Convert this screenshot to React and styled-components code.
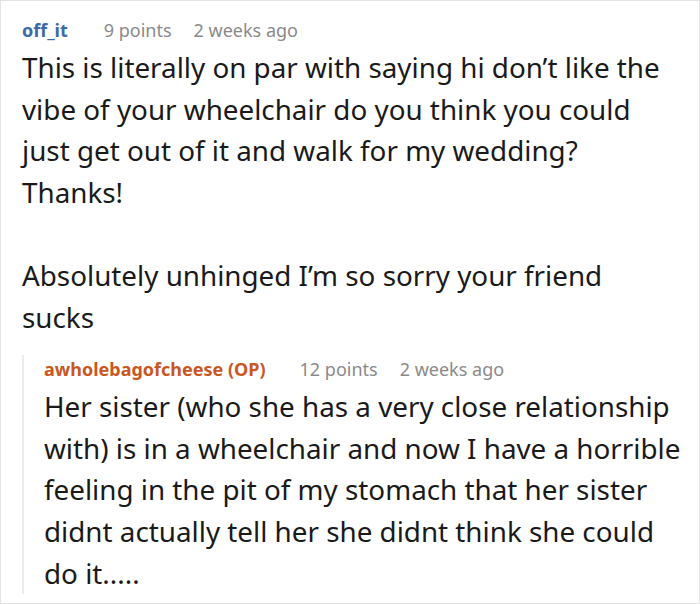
import React from 'react'
import styled, { createGlobalStyle } from 'styled-components'

const Global = createGlobalStyle`
  html, body { margin: 0; padding: 0; background: #fff; }
  body { font-family: "Noto Sans", sans-serif; }
`

const Frame = styled.div`
  width: 700px;
  height: 604px;
  box-sizing: border-box;
  border: 1px solid #e3e3e3;
  padding: 15px 0 0 21px;
  overflow: hidden;
`

const Comment = styled.div`
  display: flex;
  flex-direction: column;
`

const Meta = styled.div`
  display: flex;
  align-items: baseline;
  font-size: 18px;
  line-height: 28px;
  margin-bottom: 3px;
  color: #8a8a8a;
`

const Author = styled.span`
  font-weight: 700;
  color: ${p => p.$op ? '#c9571f' : '#3b6aa8'};
  margin-right: ${p => p.$op ? '34px' : '36px'};
`

const Points = styled.span`
  margin-right: 22px;
`

const Body = styled.div`
  font-size: 27.8px;
  line-height: 41.6px;
  color: #1a1a1a;
  max-width: ${p => p.$narrow ? '650px' : 'none'};
  p { margin: 0; }
  p + p { margin-top: 41.6px; }
`

const Reply = styled.div`
  margin-top: 17px;
  border-left: 2px solid #ececec;
  padding-left: 20px;
`

const replyText = 'Her sister (who she has a very close relationship with) is in a wheelchair and now I have a horrible feeling in the pit of my stomach that her sister didnt actually tell her she didnt think she could do\u00a0it.....'

const App = () => {
  return (
    <>
      <Global />
      <Frame>
        <Comment>
          <Meta>
            <Author>off_it</Author>
            <Points>9 points</Points>
            <span>2 weeks ago</span>
          </Meta>
          <Body $narrow>
            <p>This is literally on par with saying hi don’t like the vibe of your wheelchair do you think you could just get out of it and walk for my wedding? Thanks!</p>
            <p>Absolutely unhinged I’m so sorry your friend sucks</p>
          </Body>
          <Reply>
            <Meta>
              <Author $op>awholebagofcheese (OP)</Author>
              <Points>12 points</Points>
              <span>2 weeks ago</span>
            </Meta>
            <Body>
              <p>{replyText}</p>
            </Body>
          </Reply>
        </Comment>
      </Frame>
    </>
  )
}

export default App
